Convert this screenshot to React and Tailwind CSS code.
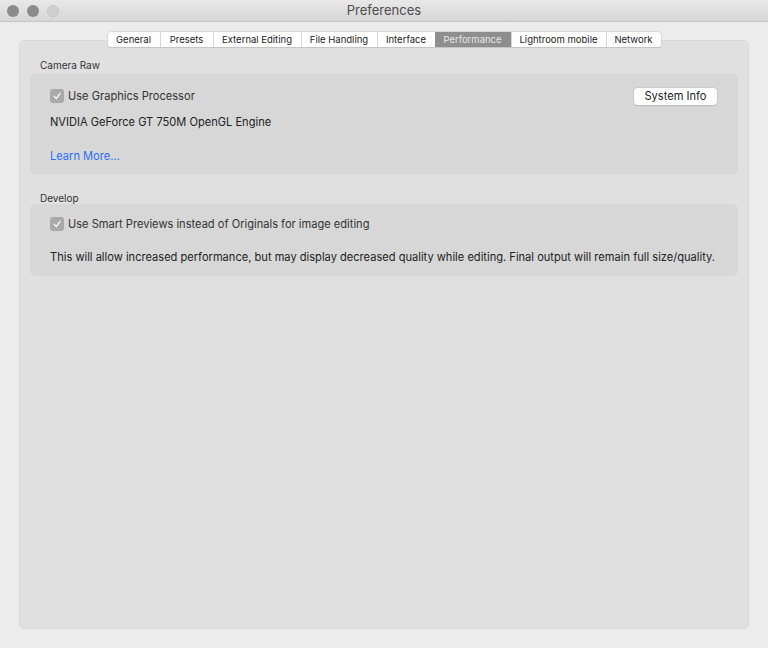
import React from 'react';

const tabs = ['General', 'Presets', 'External Editing', 'File Handling', 'Interface', 'Performance', 'Lightroom mobile', 'Network'];
const tabWidths = [52, 53, 88, 76, 58, 76, 95, 55];

function Check() {
  return (
    <span className="w-[14px] h-[14px] rounded-[3px] bg-[#a9a9a9] flex items-center justify-center shrink-0">
      <svg width="10" height="10" viewBox="0 0 10 10">
        <path d="M2 5.3 L4.2 7.6 L8 2.4" fill="none" stroke="#f2f2f2" strokeWidth="1.5" strokeLinecap="round" strokeLinejoin="round" />
      </svg>
    </span>
  );
}

export default function App() {
  return (
    <div className="w-[768px] h-[648px] bg-[#ececec] flex flex-col text-[#262626]" style={{ fontFamily: 'Inter, "Helvetica Neue", Arial, sans-serif' }}>
      {/* Title bar */}
      <div className="h-[22px] shrink-0 relative flex items-center justify-center bg-gradient-to-b from-[#e8e8e8] to-[#d6d6d6] border-b border-[#c4c4c4]">
        <div className="absolute left-[7px] top-[5px] flex gap-[8px]">
          <span className="w-[12px] h-[12px] rounded-full bg-[#8b8b8b]" />
          <span className="w-[12px] h-[12px] rounded-full bg-[#8b8b8b]" />
          <span className="w-[12px] h-[12px] rounded-full bg-[#d0d0d0] border border-[#c4c4c4]" />
        </div>
        <span className="text-[13px] text-[#4d4d4d]">Preferences</span>
      </div>

      {/* Body */}
      <div className="flex-1 px-[19px] pt-[10px] pb-[19px] flex flex-col">
        <div className="flex justify-center relative z-10 h-[14px]">
          <div className="flex h-[15px] bg-white rounded-[3px] shadow-[0_0_0_0.5px_#c8c8c8,0_1px_1px_rgba(0,0,0,0.15)] overflow-hidden">
            {tabs.map((t, i) => (
              <div
                key={t}
                style={{ width: tabWidths[i] }}
                className={
                  'flex items-center justify-center text-[9.5px] leading-none ' +
                  (i > 0 ? 'border-l border-[#d8d8d8] ' : '') +
                  (t === 'Performance' ? 'bg-[#8e8e8e] text-[#e8e8e8] border-l-0' : 'text-[#222]')
                }
              >
                {t}
              </div>
            ))}
          </div>
        </div>
        <div className="flex-1 -mt-[6px] bg-[#e0e0e0] rounded-[5px] border border-[#dadada] px-[10px] pt-[19px]">
          <div className="text-[10px] text-[#333] pl-[10px] leading-none">Camera Raw</div>
          <div className="mt-[4px] bg-[#d7d7d7] rounded-[5px] h-[100px] pl-[20px] pr-[21px] pt-[14px] flex flex-col">
            <div className="flex items-center justify-between">
              <div className="flex items-center gap-[4px] text-[11.1px]">
                <Check />
                <span className="text-[#333]">Use Graphics Processor</span>
              </div>
              <div className="w-[83px] h-[17px] bg-white rounded-[4px] shadow-[0_0_0_0.5px_#bdbdbd,0_1px_1px_rgba(0,0,0,0.15)] flex items-center justify-center text-[11.1px] text-[#222]">
                System Info
              </div>
            </div>
            <div className="text-[11.1px] mt-[9px] text-[#222]">NVIDIA GeForce GT 750M OpenGL Engine</div>
            <div className="text-[11.1px] mt-[17px] text-[#2a6cf6]">Learn More...</div>
          </div>
          <div className="text-[10px] text-[#333] pl-[10px] leading-none mt-[19px]">Develop</div>
          <div className="mt-[1px] bg-[#d7d7d7] rounded-[5px] h-[72px] pl-[20px] pt-[12px] flex flex-col">
            <div className="flex items-center gap-[4px] text-[11.1px]">
              <Check />
              <span className="text-[#333]">Use Smart Previews instead of Originals for image editing</span>
            </div>
            <div className="text-[11.1px] mt-[16px] text-[#222] whitespace-nowrap">
              This will allow increased performance, but may display decreased quality while editing. Final output will remain full size/quality.
            </div>
          </div>
        </div>
      </div>
    </div>
  );
}
